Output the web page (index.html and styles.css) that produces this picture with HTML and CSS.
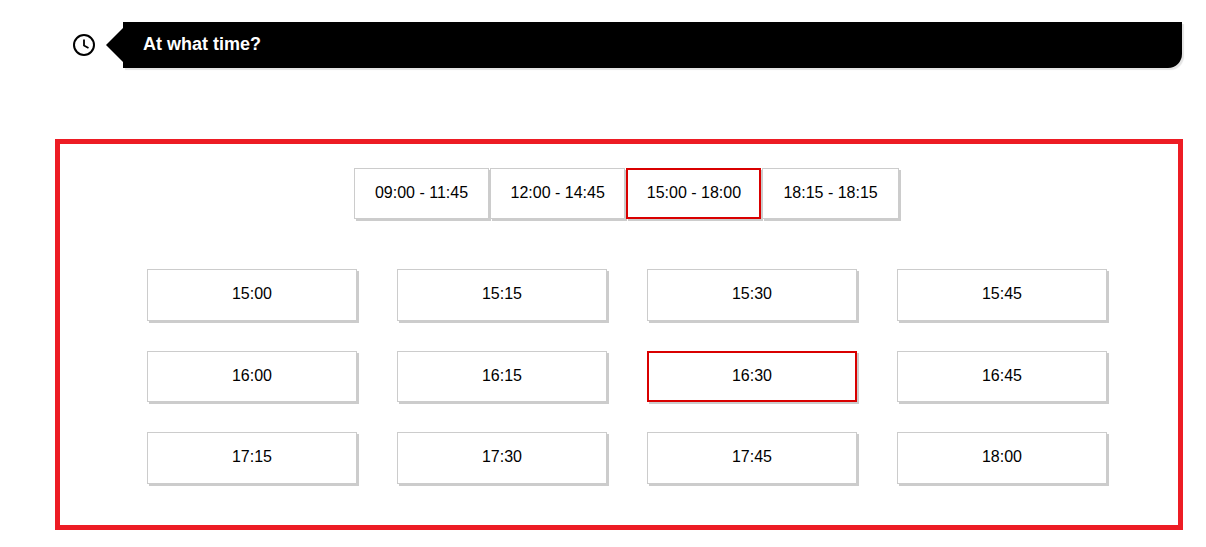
FILE: index.html
```html
<!DOCTYPE html>
<html lang="en">
<head>
  <meta charset="UTF-8" />
  <meta name="viewport" content="width=device-width, initial-scale=1" />
  <title>At what time?</title>
  <link rel="stylesheet" href="styles.css">
</head>
<body>

  <div class="step-header">
    <svg class="step-icon" width="24" height="24" viewBox="0 0 24 24" fill="none" stroke="#000" stroke-width="2">
      <circle cx="12" cy="12" r="10" />
      <path d="M12 6.5V12.5L16.5 15" stroke-width="1.8" />
    </svg>
    <h2 class="step-title">At what time?</h2>
  </div>

  <div class="time-panel">
    <div class="period-tabs">
      <button class="period-tab" type="button">09:00 - 11:45</button>
      <button class="period-tab" type="button">12:00 - 14:45</button>
      <button class="period-tab active" type="button">15:00 - 18:00</button>
      <button class="period-tab" type="button">18:15 - 18:15</button>
    </div>

    <div class="slot-grid">
      <button class="slot" type="button">15:00</button>
      <button class="slot" type="button">15:15</button>
      <button class="slot" type="button">15:30</button>
      <button class="slot" type="button">15:45</button>
      <button class="slot" type="button">16:00</button>
      <button class="slot" type="button">16:15</button>
      <button class="slot active" type="button">16:30</button>
      <button class="slot" type="button">16:45</button>
      <button class="slot" type="button">17:15</button>
      <button class="slot" type="button">17:30</button>
      <button class="slot" type="button">17:45</button>
      <button class="slot" type="button">18:00</button>
    </div>
  </div>

</body>
</html>
```

FILE: styles.css
```css
body {
  margin: 0;
  font-family: "Liberation Sans", Arial, sans-serif;
  background: #fff;
  color: #000;
}

button {
  font-family: inherit;
  font-size: 16px;
  color: #000;
  background: #fff;
  border: 1px solid #ccc;
  box-shadow: 2px 2px 0 #ccc;
  cursor: pointer;
}

button.active {
  border: 2px solid #d90000;
}

.step-header {
  display: flex;
  align-items: center;
  height: 46px;
  margin: 22px 24px 0 72px;
}

.step-icon {
  flex: none;
  margin-right: 27px;
}

.step-title {
  flex: 1;
  position: relative;
  margin: 0;
  height: 46px;
  line-height: 45px;
  padding-left: 20px;
  font-size: 18px;
  font-weight: bold;
  color: #fff;
  background: #000;
  border-bottom-right-radius: 14px;
  box-shadow: 2px 2px 1px #e4e4e4;
}

/* arrow pointing at the icon */
.step-title::before {
  content: "";
  position: absolute;
  left: -17px;
  top: 6px;
  border-style: solid;
  border-width: 17px 17px 17px 0;
  border-color: transparent #000 transparent transparent;
}

.time-panel {
  margin: 71px 23px 0 55px;
  height: 391px;
  box-sizing: border-box;
  border: 5px solid #ed1c24;
  padding: 24px 71px 0 87px;
}

.period-tabs {
  display: flex;
  justify-content: center;
  gap: 1px;
  margin-right: 1.4px;
}

.period-tab {
  width: 135.2px;
  height: 50.5px;
  padding: 0;
}

.period-tab:last-child {
  width: 136.2px;
}

.slot-grid {
  display: grid;
  grid-template-columns: repeat(4, 210px);
  grid-auto-rows: 51.5px;
  gap: 30px 40px;
  margin-top: 50.75px;
}

.slot {
  padding: 0 0 2px;
}
```
